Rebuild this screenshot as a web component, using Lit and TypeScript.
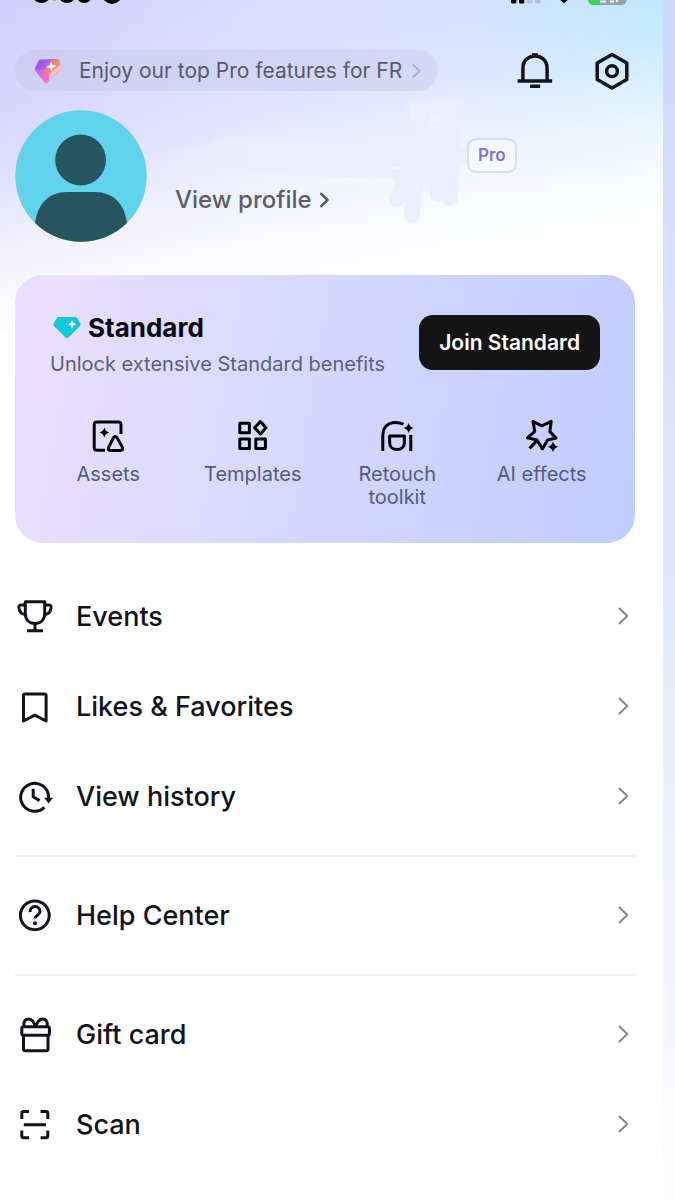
import { LitElement, html, svg, css } from "lit";
import { customElement } from "lit/decorators.js";

const chevron = html`<svg class="chevron" viewBox="0 0 24 24" width="24" height="24" aria-hidden="true"><path d="M8.5 4.5 16.3 12 8.5 19.5" /></svg>`;

const sparkle = (x: number, y: number, r: number) =>
  svg`<path class="solid" d="M${x} ${y - r}Q${x + r * 0.2} ${y - r * 0.2} ${x + r} ${y}Q${x + r * 0.2} ${y + r * 0.2} ${x} ${y + r}Q${x - r * 0.2} ${y + r * 0.2} ${x - r} ${y}Q${x - r * 0.2} ${y - r * 0.2} ${x} ${y - r}Z"/>`;

const icons: Record<string, unknown> = {
  trophy: svg`<path d="M10.3 5.8H29.7V17.5C29.7 24 25.4 27.5 20 27.5S10.3 24 10.3 17.5Z"/><path d="M10.3 9H6.2Q3.6 9 3.9 11.6C4.3 15.8 6.3 18.3 10.6 18.6M29.7 9h4.1q2.6 0 2.3 2.6c-.4 4.2-2.4 6.7-6.7 7M20 27.5V34.5M12 34.7H28"/>`,
  bookmark: svg`<path d="M8.5 9.6Q8.5 8 10.1 8H29.5Q31.1 8 31.1 9.6V35L19.8 29.2 8.5 35Z"/>`,
  history: svg`<path d="M29.4 31.4A14 14 0 1 1 33.6 20V23.5M18.2 12.8V20.8L24.6 24.6"/><path class="solid" d="M29.2 21.8H38L33.6 27.6Z"/>`,
  help: svg`<circle cx="19.8" cy="20.3" r="14.4"/><path d="M15 17.2C14.6 9.6 25.2 9.9 25 16.6 24.8 20 20 20.4 20 23.6"/><circle class="solid" cx="20" cy="28.3" r="2"/>`,
  gift: svg`<rect x="6.8" y="12.8" width="27.6" height="8.4" rx="1.8"/><path d="M8.5 21.2V34.8Q8.5 36.8 10.5 36.8H31Q33 36.8 33 34.8V21.2M20.6 12.8C18.6 6.8 15.6 4.2 12.2 5.2 8.2 6.6 8.6 11 9.6 12.6M20.6 12.8C22.6 6.8 25.6 4.2 29 5.2 33 6.6 32.6 11 31.6 12.6"/>`,
  scan: svg`<path d="M6.8 15V9.4Q6.8 7.6 8.6 7.6H14M25.6 7.6H31Q32.8 7.6 32.8 9.4V15M32.8 26.6V32Q32.8 33.8 31 33.8H25.6M14 33.8H8.6Q6.8 33.8 6.8 32V26.6M8.8 20.7H31"/>`,
  bell: svg`<path d="M7.9 30V17.5C7.9 9.8 13.2 5 20 5S32.1 9.8 32.1 17.5V30M2.6 30H37.2M15 35.2H25.2M17 4H23"/>`,
  settings: svg`<path d="M20 3.6 34.8 12V28.6L20 37 5.2 28.6V12Z"/><circle cx="20" cy="20.2" r="5.4"/>`,
  assets: svg`<path d="M17 34.2H9Q6.2 34.2 6.2 31.4V8.8Q6.2 6 9 6H30.2Q33 6 33 8.8V18"/><path d="M25.5 21.6Q27.2 19.2 29 21.6L34.4 31.4Q35.4 34.2 32.4 34.4H22.6Q19.6 34.2 20.6 31.4Z"/>${sparkle(16.4, 16.6, 5)}`,
  templates: svg`<path d="M6.8 7.2h9.6v9.6H6.8ZM6.8 23h9.6v9.6H6.8ZM22.8 23h9.6v9.6H22.8ZM27.4 5.6 33 11.8 27.4 18 21.6 11.8Z"/>`,
  retouch: svg`<path d="M5.8 35V20C5.8 10.6 11.6 6.4 18.6 6.4 21.6 6.4 24.4 7 26.4 8.2M12.6 20H27.4V26.4C27.4 31 24.4 33.6 20 33.6S12.6 31 12.6 26.4ZM33.8 19V35"/>${sparkle(31.6, 12, 5)}`,
  effects: svg`<path d="M11 5.4 19.8 9.8 29.2 5.4 27.8 15.6 34 22 25.6 24 20.4 33 15 24 5.4 21.8 12.8 15.4ZM15.2 24.4 7.6 32.4"/>${sparkle(31, 30.8, 5.4)}`,
};

const icon = (name: string) =>
  html`<svg class="icon" viewBox="0 0 40 40" width="40" height="40" aria-hidden="true">${icons[name]}</svg>`;

const features = [
  ["assets", "Assets"],
  ["templates", "Templates"],
  ["retouch", "Retouch toolkit"],
  ["effects", "AI effects"],
];

const groups = [
  [["trophy", "Events"], ["bookmark", "Likes & Favorites"], ["history", "View history"]],
  [["help", "Help Center"]],
  [["gift", "Gift card"], ["scan", "Scan"]],
];

@customElement("app-root")
export class AppRoot extends LitElement {
  static styles = css`
    :host {
      display: flex;
      min-height: 100vh;
      font-family: Inter, "Noto Sans", sans-serif;
      color: #11131c;
      background: #fff;
    }
    * { box-sizing: border-box; }
    a { color: inherit; text-decoration: none; }
    button { font: inherit; border: 0; padding: 0; background: none; color: inherit; }
    svg { display: block; flex: none; }
    .page {
      flex: 1;
      min-width: 0;
      padding: 0 28px 30px 15px;
      background:
        linear-gradient(169deg, rgba(255,255,255,0) 0, rgba(255,255,255,.12) 22%, rgba(255,255,255,.3) 36%, rgba(255,255,255,.68) 53%, rgba(255,255,255,.9) 67%, #fff 78%) left top / 100% 330px no-repeat,
        linear-gradient(90deg, #d3cffd 0, #d9daff 42%, #cfdeff 70%, #afe2ff 100%) left top / 100% 330px no-repeat,
        #fff;
    }
    .edge {
      width: 12px;
      flex: none;
      background: linear-gradient(180deg, #cdd9fd 0, #dae2fb 30%, #e5e8fb 52%, #eff1fc 72%, #fdfdff 100%);
    }
    .icon, .chevron { fill: none; stroke: currentColor; stroke-width: 3; stroke-linejoin: round; }
    .chevron { stroke: #858891; stroke-width: 2; stroke-linecap: round; }
    .solid { fill: currentColor; stroke: none; }

    .status {
      height: 8px;
      overflow: hidden;
      display: flex;
      align-items: flex-end;
      justify-content: space-between;
      padding: 0 8px 0 18px;
      color: #000;
    }
    .clock { display: flex; align-items: flex-end; gap: 9px; font-size: 26px; line-height: 28px; font-weight: 700; }
    .signals { display: flex; align-items: flex-end; }

    .topbar { display: flex; align-items: center; margin-top: 42px; padding-right: 3px; }
    .promo {
      display: flex;
      align-items: center;
      gap: 4px;
      height: 41px;
      padding: 0 12px 0 18px;
      border-radius: 21px;
      background: rgba(190,196,228,.36);
      color: #555a70;
      font-size: 21px;
      white-space: nowrap;
    }
    .promo span { margin-left: 12px; }
    .promo .chevron { width: 20px; height: 20px; stroke: #a4a8bb; }
    .actions { display: flex; gap: 37px; margin-left: auto; }
    .actions button { display: block; height: 40px; }
    .actions .icon { stroke-width: 3.5; }

    .profile { display: flex; margin-top: 19px; height: 132px; }
    .identity { position: relative; flex: 1; margin-left: 28px; padding-top: 28px; }
    .scribble { position: absolute; left: -21px; top: -20px; }
    .badge {
      position: absolute;
      left: 292px;
      top: 28px;
      padding: 0 9px;
      line-height: 31px;
      border: 2px solid #dcd8fa;
      border-radius: 9px;
      font-size: 17px;
      font-weight: 600;
      color: #8570db;
      background: rgba(255,255,255,.4);
    }
    .view { display: flex; align-items: center; gap: 2px; margin-top: 46px; font-size: 24px; line-height: 32px; font-weight: 500; color: #5a5d6b; }
    .view .chevron { width: 20px; height: 20px; stroke: #5a5d6b; stroke-width: 3; }

    .card {
      margin-top: 33px;
      padding: 40px 21px 34px;
      border-radius: 28px;
      background: linear-gradient(100deg, #ecdffd 0, #dcdafe 36%, #cdd5ff 64%, #bfceff 100%);
    }
    .offer { display: flex; justify-content: space-between; padding: 0 14px; }
    .title { display: flex; align-items: center; gap: 7px; margin: 0; padding-left: 3px; font-size: 26px; line-height: 25px; font-weight: 700; color: #060814; }
    .sub { margin: 12px 0 0; font-size: 20px; line-height: 24px; color: #59607f; white-space: nowrap; }
    .join {
      flex: none;
      height: 55px;
      padding: 0 20px;
      border-radius: 14px;
      background: #141414;
      color: #fff;
      font-size: 21px;
      font-weight: 600;
    }
    .features { display: grid; grid-template-columns: repeat(4, 1fr); margin-top: 40px; }
    .feature { display: flex; flex-direction: column; align-items: center; gap: 7px; color: #000; }
    .feature span { max-width: 110px; text-align: center; font-size: 20px; line-height: 23px; color: #535c80; }

    nav { padding-top: 28px; }
    .group + .group { margin-top: 14px; padding-top: 13px; border-top: 2px solid #f1f1f3; }
    .row { display: flex; align-items: center; height: 90px; gap: 21px; font-size: 27px; font-weight: 500; }
    .row .chevron { margin-left: auto; }
  `;

  render() {
    return html`
      <main class="page">
        <div class="status">
          <div class="clock">
            <span>8:30</span>
            <svg width="20" height="28" viewBox="0 0 20 28"><circle cx="10" cy="14" r="10" /></svg>
          </div>
          <div class="signals">
            <svg width="118" height="24" viewBox="0 0 118 24">
              <rect x="2" y="14" width="5.4" height="5.6" rx="1.5" /><rect x="10" y="10" width="5.4" height="9.6" rx="1.5" />
              <rect x="18" y="6" width="5.4" height="13.6" rx="1.5" fill="#b3c0da" /><rect x="26" y="2" width="5.4" height="17.6" rx="1.5" fill="#b3c0da" />
              <path d="M43 8Q55 0 67 8L56 18.6Q55 20 54 18.6Z" />
              <rect x="79" y="2" width="39" height="19" rx="6" fill="#93a4ae" />
              <path d="M94 2H85Q79 2 79 8V15Q79 21 85 21H91Z" fill="#3fce62" />
              <path d="M91 17.4H97M101 17.4H105M108 18V12" stroke="#fff" stroke-width="2" />
            </svg>
          </div>
        </div>

        <header class="topbar">
          <a class="promo" href="#pro">
            <svg width="30" height="28" viewBox="0 0 30 28" aria-hidden="true">
              <defs>
                <linearGradient id="gem" x1="0" y1="0" x2="1" y2=".7">
                  <stop offset="0" stop-color="#8a55e6" /><stop offset=".35" stop-color="#a55bf3" />
                  <stop offset=".6" stop-color="#fb8b7a" /><stop offset="1" stop-color="#ffb9df" />
                </linearGradient>
              </defs>
              <path d="M6.4 2.6 23.6 2Q25.4 2 26.4 3.8L28.6 9.4Q29 11 28 12.4L14.6 26Q13 27 11.6 25.4L2.4 13.6Q1.4 12 2.2 10.4Z" fill="url(#gem)" />
              <path d="M2 12 11 13 20 17 13 26.4Z" fill="#e063ef" opacity=".75" />
              <path d="M19 3 25.6 2.8 27 7 14 19 10 16Z" fill="#f7835f" opacity=".6" />
              <path d="M16 17 27.6 7.4 28.4 11 16 23Z" fill="#ffd0dc" opacity=".7" />
              <path d="M18 4.6 19.6 8 23.4 9 19.8 10.8 18.4 14.4 16.8 11 13 10 16.6 8.4Z" fill="#fff" />
            </svg>
            <span>Enjoy our top Pro features for FR</span>${chevron}
          </a>
          <div class="actions">
            <button aria-label="Notifications">${icon("bell")}</button>
            <button aria-label="Settings">${icon("settings")}</button>
          </div>
        </header>

        <section class="profile">
          <svg width="132" height="132" viewBox="0 0 132 132" aria-hidden="true">
            <clipPath id="disc"><circle cx="66" cy="66" r="65.7" /></clipPath>
            <circle cx="66" cy="66" r="65.7" fill="#5fd3eb" />
            <circle cx="65.6" cy="50" r="25.4" fill="#26545f" />
            <path clip-path="url(#disc)" d="M20 140V114C22 94 34 82 52 82H80C98 82 110 94 112 114V140Z" fill="#26545f" />
          </svg>
          <div class="identity">
            <svg class="scribble" width="320" height="140" viewBox="0 0 320 140" aria-hidden="true">
              <defs>
                <linearGradient id="smear" gradientUnits="userSpaceOnUse" x1="0" y1="0" x2="320" y2="0">
                  <stop offset="0" stop-color="#ecedfd" stop-opacity="0" /><stop offset=".3" stop-color="#ecedfd" />
                  <stop offset="1" stop-color="#edeefd" />
                </linearGradient>
              </defs>
              <g fill="url(#smear)">
                <path d="M12 66Q13 60 30 58L56 56 62 50 231 50Q248 48 256 54V12Q284 8 309 12L306 58 313 60V72L306 74 303 94H250L240 90 222 86Q190 89 160 86 100 82 40 82 12 84 12 66Z" />
              </g>
              <path d="M250 90 243 109M261 90 258 125M284 88V104M297 88 296 108" fill="none" stroke="#edeefd" stroke-width="16" stroke-linecap="round" />
              <path d="M277 24H286V32L276 34Z" fill="#f1f3fe" />
              <ellipse cx="243" cy="78" rx="4" ry="1.5" fill="#f6f7ff" />
            </svg>
            <span class="badge">Pro</span>
            <a class="view" href="#profile">View profile ${chevron}</a>
          </div>
        </section>

        <section class="card">
          <div class="offer">
            <div>
              <h2 class="title">
                <svg width="28" height="24" viewBox="0 0 28 24" aria-hidden="true">
                  <path d="M6 1H22Q23.4 1 24.2 2.2L27.4 7.6Q28 8.8 27 10L15.2 21.8Q14 23 12.8 21.8L1 10Q0 8.8 .6 7.6L3.8 2.2Q4.6 1 6 1Z" fill="#10c8dc" />
                  <path d="M19 3.8 20.3 6.9 23.6 8.2 20.3 9.5 19 12.8 17.7 9.5 14.4 8.2 17.7 6.9Z" fill="#fff" />
                </svg>
                Standard
              </h2>
              <p class="sub">Unlock extensive Standard benefits</p>
            </div>
            <button class="join">Join Standard</button>
          </div>
          <div class="features">
            ${features.map(([name, label]) => html`<a class="feature" href="#${name}">${icon(name)}<span>${label}</span></a>`)}
          </div>
        </section>

        <nav>
          ${groups.map(
            (rows) => html`<div class="group">
              ${rows.map(([name, label]) => html`<a class="row" href="#${name}">${icon(name)}<span>${label}</span>${chevron}</a>`)}
            </div>`
          )}
        </nav>
      </main>
      <div class="edge"></div>
    `;
  }
}
